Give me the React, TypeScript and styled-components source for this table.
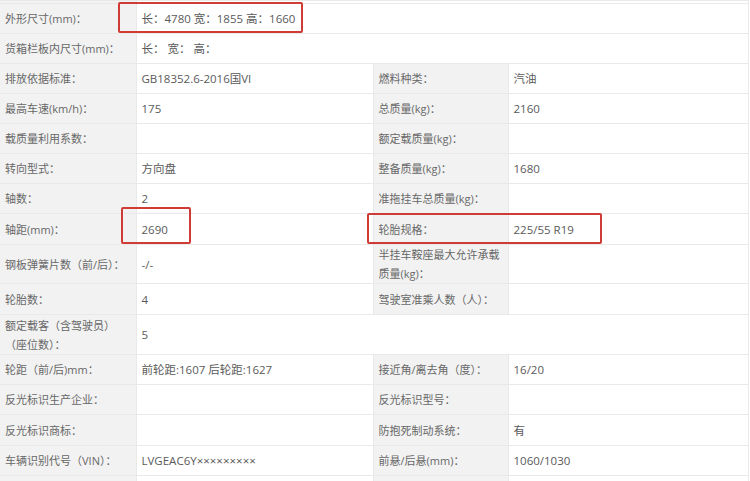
import React from 'react';
import styled, { createGlobalStyle } from 'styled-components';

const GlobalStyle = createGlobalStyle`
  body {
    margin: 0;
    background: #ffffff;
    font-family: "Open Sans", "Noto Sans CJK SC", sans-serif;
  }
`;

const SPage = styled.div`
  position: relative;
  width: 750px;
  height: 481px;
  overflow: hidden;
  background: #ffffff;
`;

const STable = styled.table`
  width: 748px;
  border-collapse: collapse;
  table-layout: fixed;
`;

const SRow = styled.tr<{ $h: number }>`
  height: ${({ $h }) => $h}px;
`;

const SLabel = styled.td`
  background: #f2f2f2;
  color: #686868;
  font-size: 11px;
  line-height: 19px;
  padding: 0 5px;
  border: 1px solid #e9e9e9;
  border-left: none;
  vertical-align: middle;
  white-space: normal;
  word-break: break-all;
`;

const SValue = styled.td`
  background: #ffffff;
  color: #5a5a5a;
  font-size: 11.5px;
  line-height: 19px;
  padding: 0 5px;
  border: 1px solid #e9e9e9;
  vertical-align: middle;
  white-space: nowrap;
`;

const SMark = styled.div<{ $x: number; $y: number; $w: number; $h: number }>`
  position: absolute;
  left: ${({ $x }) => $x}px;
  top: ${({ $y }) => $y}px;
  width: ${({ $w }) => $w}px;
  height: ${({ $h }) => $h}px;
  box-sizing: border-box;
  border: 2px solid #cf3b35;
  border-radius: 2px;
  pointer-events: none;
`;

type Row = {
  h?: number;
  cells: [string, string, string?, string?];
  wide?: boolean;
};

const rows: Row[] = [
  { cells: ['外形尺寸(mm)：', '长：4780 宽：1855 高：1660'], wide: true },
  { cells: ['货箱栏板内尺寸(mm)：', '长：  宽：  高：'], wide: true },
  { cells: ['排放依据标准：', 'GB18352.6-2016国VI', '燃料种类：', '汽油'] },
  { cells: ['最高车速(km/h)：', '175', '总质量(kg)：', '2160'] },
  { cells: ['载质量利用系数：', '', '额定载质量(kg)：', ''] },
  { cells: ['转向型式：', '方向盘', '整备质量(kg)：', '1680'] },
  { cells: ['轴数：', '2', '准拖挂车总质量(kg)：', ''] },
  { h: 31, cells: ['轴距(mm)：', '2690', '轮胎规格：', '225/55 R19'] },
  { h: 39, cells: ['钢板弹簧片数（前/后）：', '-/-', '半挂车鞍座最大允许承载质量(kg)：', ''] },
  { h: 31, cells: ['轮胎数：', '4', '驾驶室准乘人数（人）：', ''] },
  { h: 40, cells: ['额定载客（含驾驶员）（座位数）：', '5'], wide: true },
  { cells: ['轮距（前/后)mm：', '前轮距:1607 后轮距:1627', '接近角/离去角（度）：', '16/20'] },
  { cells: ['反光标识生产企业：', '', '反光标识型号：', ''] },
  { h: 31, cells: ['反光标识商标：', '', '防抱死制动系统：', '有'] },
  { cells: ['车辆识别代号（VIN）：', 'LVGEAC6Y×××××××××', '前悬/后悬(mm)：', '1060/1030'] },
  { cells: ['', '', '', ''] },
];

export default function App() {
  return (
    <SPage>
      <GlobalStyle />
      <STable>
        <colgroup>
          <col style={{ width: 136 }} />
          <col style={{ width: 237 }} />
          <col style={{ width: 135 }} />
          <col style={{ width: 240 }} />
        </colgroup>
        <tbody>
          <SRow $h={3}>
            <SLabel />
            <SValue colSpan={3} />
          </SRow>
          {rows.map((r, i) => (
            <SRow key={i} $h={r.h ?? 30}>
              <SLabel>{r.cells[0]}</SLabel>
              {r.wide ? (
                <SValue colSpan={3}>{r.cells[1]}</SValue>
              ) : (
                <>
                  <SValue>{r.cells[1]}</SValue>
                  <SLabel>{r.cells[2]}</SLabel>
                  <SValue>{r.cells[3]}</SValue>
                </>
              )}
            </SRow>
          ))}
        </tbody>
      </STable>
      <SMark $x={118} $y={2} $w={185} $h={31} />
      <SMark $x={121} $y={207} $w={70} $h={37} />
      <SMark $x={367} $y={213} $w={235} $h={31} />
    </SPage>
  );
}
